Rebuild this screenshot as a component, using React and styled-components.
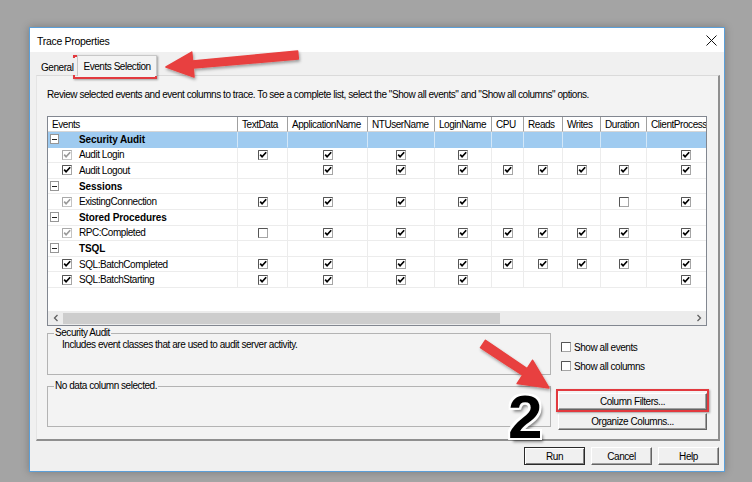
import React from "react";
import styled, { createGlobalStyle } from "styled-components";

const GlobalStyle = createGlobalStyle`
  html, body {
    margin: 0;
    padding: 0;
  }
  body {
    width: 752px;
    height: 482px;
    overflow: hidden;
    background: #a4a4a4;
    font-family: "Liberation Sans", Arial, sans-serif;
    font-size: 10px;
    letter-spacing: -0.45px;
    color: #000;
  }
`;

// column widths of the event grid (last one is clipped by the grid edge)
const COLS = [
  { name: "Events", w: 190 },
  { name: "TextData", w: 50 },
  { name: "ApplicationName", w: 80 },
  { name: "NTUserName", w: 67 },
  { name: "LoginName", w: 57 },
  { name: "CPU", w: 32 },
  { name: "Reads", w: 39 },
  { name: "Writes", w: 38 },
  { name: "Duration", w: 46 },
  { name: "ClientProcessID", w: 78 },
];
const TEMPLATE = COLS.map((c) => `${c.w}px`).join(" ");

// 1 = checked, 2 = empty box, 0 = nothing
const ROWS = [
  { type: "cat", name: "Security Audit", selected: true },
  { type: "event", name: "Audit Login", muted: true, cells: [1, 1, 1, 1, 0, 0, 0, 0, 1] },
  { type: "event", name: "Audit Logout", cells: [0, 1, 1, 1, 1, 1, 1, 1, 1] },
  { type: "cat", name: "Sessions" },
  { type: "event", name: "ExistingConnection", muted: true, cells: [1, 1, 1, 1, 0, 0, 0, 2, 1] },
  { type: "cat", name: "Stored Procedures" },
  { type: "event", name: "RPC:Completed", muted: true, cells: [2, 1, 1, 1, 1, 1, 1, 1, 1] },
  { type: "cat", name: "TSQL" },
  { type: "event", name: "SQL:BatchCompleted", cells: [1, 1, 1, 1, 1, 1, 1, 1, 1] },
  { type: "event", name: "SQL:BatchStarting", cells: [1, 1, 1, 1, 0, 0, 0, 0, 1] },
];

const Stage = styled.div`
  position: relative;
  width: 752px;
  height: 482px;
  box-sizing: border-box;
  padding: 27px 0 0 29px;
`;

const Dialog = styled.div`
  width: 696px;
  height: 445px;
  box-sizing: border-box;
  background: #f0f0f0;
  border: 1px solid #5b9fd8;
  box-shadow: 0 0 8px rgba(0, 0, 0, 0.25);
  display: flex;
  flex-direction: column;
`;

const TitleBar = styled.div`
  height: 24px;
  flex-shrink: 0;
  background: #fff;
  display: flex;
  align-items: center;
  justify-content: space-between;
  padding: 0 7px 0 7px;
`;

const Title = styled.div`
  font-size: 10.5px;
  letter-spacing: -0.3px;
  padding-top: 1px;
`;

const Client = styled.div`
  flex: 1;
  display: flex;
  flex-direction: column;
  padding: 3px 4px 0 6px;
`;

const TabStrip = styled.div`
  display: flex;
  align-items: flex-end;
  height: 20px;
`;

const Tab = styled.div`
  position: relative;
  z-index: 1;
  height: ${(p) => (p.$active ? 21 : 17)}px;
  margin-left: ${(p) => (p.$active ? 1 : 2)}px;
  margin-bottom: ${(p) => (p.$active ? -1 : 0)}px;
  padding: 0 ${(p) => (p.$active ? 5 : 2)}px;
  box-sizing: border-box;
  display: flex;
  align-items: center;
  background: ${(p) => (p.$active ? "#f3f3f3" : "#f0f0f0")};
  border: 1px solid ${(p) => (p.$active ? "#c8c8c8" : "transparent")};
  border-bottom: none;
`;

const Panel = styled.div`
  height: 366px;
  box-sizing: border-box;
  background: #f3f3f3;
  border-top: 1px solid #dadada;
  border-left: 1px solid #e4e4e4;
  border-right: 2px solid #8f8f8f;
  border-bottom: 2px solid #8f8f8f;
  padding: 13px 11px 0 10px;
  display: flex;
  flex-direction: column;
`;

const Intro = styled.p`
  margin: 0;
  line-height: 12px;
  white-space: nowrap;
`;

const Grid = styled.div`
  margin-top: 15px;
  width: 660px;
  height: 210px;
  box-sizing: border-box;
  border: 1px solid #828790;
  background: #fff;
  overflow: hidden;
  display: flex;
  flex-direction: column;
`;

const Row = styled.div`
  display: grid;
  grid-template-columns: ${TEMPLATE};
  height: ${(p) => (p.$header ? 15 : 15.6)}px;
  flex-shrink: 0;
  background: ${(p) => (p.$selected ? "#9fcbf0" : "#fff")};
`;

const HeadCell = styled.div`
  display: flex;
  align-items: center;
  padding-left: 4px;
  border-right: 1px solid #a0a0a0;
  border-bottom: 1px solid #d6d6d6;
  white-space: nowrap;
  overflow: hidden;
`;

const Cell = styled.div`
  display: flex;
  align-items: center;
  justify-content: center;
  border-right: 1px solid ${(p) => (p.$selected ? "#d3e7f8" : "#ececec")};
  border-bottom: 1px solid ${(p) => (p.$selected ? "#9fcbf0" : "#ececec")};
`;

const NameCell = styled(Cell)`
  justify-content: flex-start;
  padding-left: ${(p) => (p.$cat ? 2 : 14)}px;
  gap: ${(p) => (p.$cat ? 20 : 7)}px;
  font-weight: ${(p) => (p.$cat ? 700 : 400)};
  letter-spacing: ${(p) => (p.$cat ? "-0.1px" : "-0.45px")};
  white-space: nowrap;
`;

const Expander = styled.div`
  width: 9px;
  height: 10px;
  box-sizing: border-box;
  border: 1px solid #969696;
  background: #fff;
  display: flex;
  align-items: center;
  justify-content: center;

  &::after {
    content: "";
    width: 5px;
    height: 1px;
    background: #222;
  }
`;

const Filler = styled.div`
  flex: 1;
`;

const HScroll = styled.div`
  height: 14px;
  flex-shrink: 0;
  background: #ececec;
  display: flex;
  align-items: center;
  color: #606060;
`;

const ScrollArrow = styled.div`
  width: 15px;
  display: flex;
  justify-content: center;
`;

const Thumb = styled.div`
  height: 11px;
  width: 437px;
  background: #cdcdcd;
`;

const Bottom = styled.div`
  margin-top: 1px;
  display: flex;
  gap: 7px;
`;

const GroupColumn = styled.div`
  width: 504px;
  display: flex;
  flex-direction: column;
  gap: 5px;
`;

const Group = styled.fieldset`
  margin: 0;
  padding: 0 0 0 6px;
  min-width: 0;
  height: ${(p) => p.$h}px;
  box-sizing: border-box;
  border: 1px solid #b3b3b3;

  legend {
    padding: 0 1px;
    line-height: 12px;
  }
`;

const GroupText = styled.div`
  margin-left: 8px;
  line-height: 12px;
`;

const Side = styled.div`
  width: 149px;
  padding-top: 14px;
  display: flex;
  flex-direction: column;
`;

const CheckList = styled.div`
  display: flex;
  flex-direction: column;
  gap: 7px;
`;

const CheckRow = styled.label`
  display: flex;
  align-items: center;
  gap: 3px;
  height: 12px;
  margin-left: 3px;
`;

const SideButton = styled.button`
  width: 149px;
  height: 17px;
  margin-top: ${(p) => p.$gap}px;
  padding: 0;
  font: inherit;
  letter-spacing: inherit;
  color: #000;
  background: #f0f0f0;
  border: 1px solid;
  border-color: #fff #646464 #646464 #fff;
  box-shadow: inset -1px -1px 0 #a0a0a0;
`;

const Footer = styled.div`
  display: flex;
  justify-content: flex-end;
  gap: 6px;
  padding: 6px 1px 0 0;
`;

const DialogButton = styled.button`
  width: 61px;
  height: 18px;
  padding: 0;
  font: inherit;
  letter-spacing: inherit;
  color: #000;
  background: #f0f0f0;
  border: 1px solid;
  border-color: ${(p) =>
    p.$primary ? "#2a2a2a #2a2a2a #2a2a2a #2a2a2a" : "#fff #646464 #646464 #fff"};
  box-shadow: ${(p) =>
    p.$primary
      ? "inset 1px 1px 0 #fff, inset -1px -1px 0 #808080"
      : "inset -1px -1px 0 #a0a0a0"};
`;

// annotation overlays
const Overlay = styled.svg`
  position: absolute;
  left: 0;
  top: 0;
  pointer-events: none;
`;

const RedBox = styled.div`
  position: absolute;
  left: ${(p) => p.$x}px;
  top: ${(p) => p.$y}px;
  width: ${(p) => p.$w}px;
  height: ${(p) => p.$h}px;
  box-sizing: border-box;
  border: 2px solid #e2393e;
  box-shadow: 1px 1px 2px rgba(0, 0, 0, 0.35);
`;

const BigNumber = styled.div`
  position: absolute;
  left: 508px;
  top: 386px;
  font-family: "Liberation Sans", Arial, sans-serif;
  font-weight: 700;
  font-size: 62px;
  line-height: 62px;
  letter-spacing: 0;
  color: #000;
  text-shadow: 2px 0 0 #fff, -2px 0 0 #fff, 0 2px 0 #fff, 0 -2px 0 #fff,
    2px 2px 0 #fff, -2px -2px 0 #fff, 2px -2px 0 #fff, -2px 2px 0 #fff,
    3px 4px 3px rgba(0, 0, 0, 0.45);
`;

const Box = ({ state, muted }) => (
  <svg width="10" height="10" viewBox="0 0 10 10">
    <rect x="0.5" y="0.5" width="9" height="9" fill="#fff" stroke={muted ? "#c4c4c4" : "#a5a5a5"} />
    <path d="M0.5 9.5 V0.5 H9.5" fill="none" stroke={muted ? "#a9a9a9" : "#555"} />
    {state === 1 && (
      <path
        d="M2.2 4.6 L4.1 6.8 L8.2 2.3"
        fill="none"
        stroke={muted ? "#9a9a9a" : "#000"}
        strokeWidth="1.7"
      />
    )}
  </svg>
);

const Chevron = ({ dir }) => (
  <svg width="6" height="8" viewBox="0 0 6 8">
    <path
      d={dir === "left" ? "M4.5 1 L1.5 4 L4.5 7" : "M1.5 1 L4.5 4 L1.5 7"}
      fill="none"
      stroke="#606060"
      strokeWidth="1.3"
    />
  </svg>
);

const CloseIcon = () => (
  <svg width="11" height="11" viewBox="0 0 11 11">
    <path d="M0.5 0.5 L10.5 10.5 M10.5 0.5 L0.5 10.5" stroke="#111" strokeWidth="1" />
  </svg>
);

function arrowPoints(x1, y1, x2, y2, tailW, shaftW, headL, headW) {
  const len = Math.hypot(x2 - x1, y2 - y1);
  const ux = (x2 - x1) / len;
  const uy = (y2 - y1) / len;
  const nx = -uy;
  const ny = ux;
  const bx = x2 - ux * headL;
  const by = y2 - uy * headL;
  const p = (x, y, d) => `${x + nx * d},${y + ny * d}`;
  return [
    p(x1, y1, tailW / 2),
    p(bx, by, shaftW / 2),
    p(bx, by, headW / 2),
    `${x2},${y2}`,
    p(bx, by, -headW / 2),
    p(bx, by, -shaftW / 2),
    p(x1, y1, -tailW / 2),
  ].join(" ");
}

const Arrows = () => (
  <Overlay width="752" height="482" viewBox="0 0 752 482">
    <defs>
      <filter id="shadow" x="-20%" y="-20%" width="140%" height="140%">
        <feDropShadow dx="1" dy="2" stdDeviation="1.5" floodColor="#000" floodOpacity="0.35" />
      </filter>
    </defs>
    <g filter="url(#shadow)" fill="#e8403f" stroke="#e8403f" strokeLinejoin="round" strokeWidth="1.5">
      <polygon points={arrowPoints(298, 55, 166, 67, 8, 7, 27, 25)} />
      <polygon points={arrowPoints(483, 344, 549, 388, 9, 8, 29, 28)} />
    </g>
  </Overlay>
);

export default function App() {
  return (
    <Stage>
      <GlobalStyle />
      <Dialog>
        <TitleBar>
          <Title>Trace Properties</Title>
          <CloseIcon />
        </TitleBar>
        <Client>
          <TabStrip>
            <Tab>General</Tab>
            <Tab $active>Events Selection</Tab>
          </TabStrip>
          <Panel>
            <Intro>
              Review selected events and event columns to trace. To see a complete list, select the
              "Show all events" and "Show all columns" options.
            </Intro>
            <Grid>
              <Row $header>
                {COLS.map((c) => (
                  <HeadCell key={c.name}>{c.name}</HeadCell>
                ))}
              </Row>
              {ROWS.map((r) =>
                r.type === "cat" ? (
                  <Row key={r.name} $selected={r.selected}>
                    <NameCell $cat $selected={r.selected}>
                      <Expander />
                      {r.name}
                    </NameCell>
                    {COLS.slice(1).map((c) => (
                      <Cell key={c.name} $selected={r.selected} />
                    ))}
                  </Row>
                ) : (
                  <Row key={r.name}>
                    <NameCell>
                      <Box state={1} muted={r.muted} />
                      {r.name}
                    </NameCell>
                    {r.cells.map((v, i) => (
                      <Cell key={i}>{v ? <Box state={v} /> : null}</Cell>
                    ))}
                  </Row>
                )
              )}
              <Filler />
              <HScroll>
                <ScrollArrow>
                  <Chevron dir="left" />
                </ScrollArrow>
                <Thumb />
                <Filler />
                <ScrollArrow>
                  <Chevron dir="right" />
                </ScrollArrow>
              </HScroll>
            </Grid>
            <Bottom>
              <GroupColumn>
                <Group $h={48}>
                  <legend>Security Audit</legend>
                  <GroupText>Includes event classes that are used to audit server activity.</GroupText>
                </Group>
                <Group $h={47}>
                  <legend>No data column selected.</legend>
                </Group>
              </GroupColumn>
              <Side>
                <CheckList>
                  <CheckRow>
                    <Box state={2} />
                    Show all events
                  </CheckRow>
                  <CheckRow>
                    <Box state={2} />
                    Show all columns
                  </CheckRow>
                </CheckList>
                <SideButton $gap={21}>Column Filters...</SideButton>
                <SideButton $gap={3}>Organize Columns...</SideButton>
              </Side>
            </Bottom>
          </Panel>
          <Footer>
            <DialogButton $primary>Run</DialogButton>
            <DialogButton>Cancel</DialogButton>
            <DialogButton>Help</DialogButton>
          </Footer>
        </Client>
      </Dialog>
      <RedBox $x={73} $y={55} $w={84} $h={24} />
      <RedBox $x={556} $y={389} $w={153} $h={23} />
      <Arrows />
      <BigNumber>2</BigNumber>
    </Stage>
  );
}
